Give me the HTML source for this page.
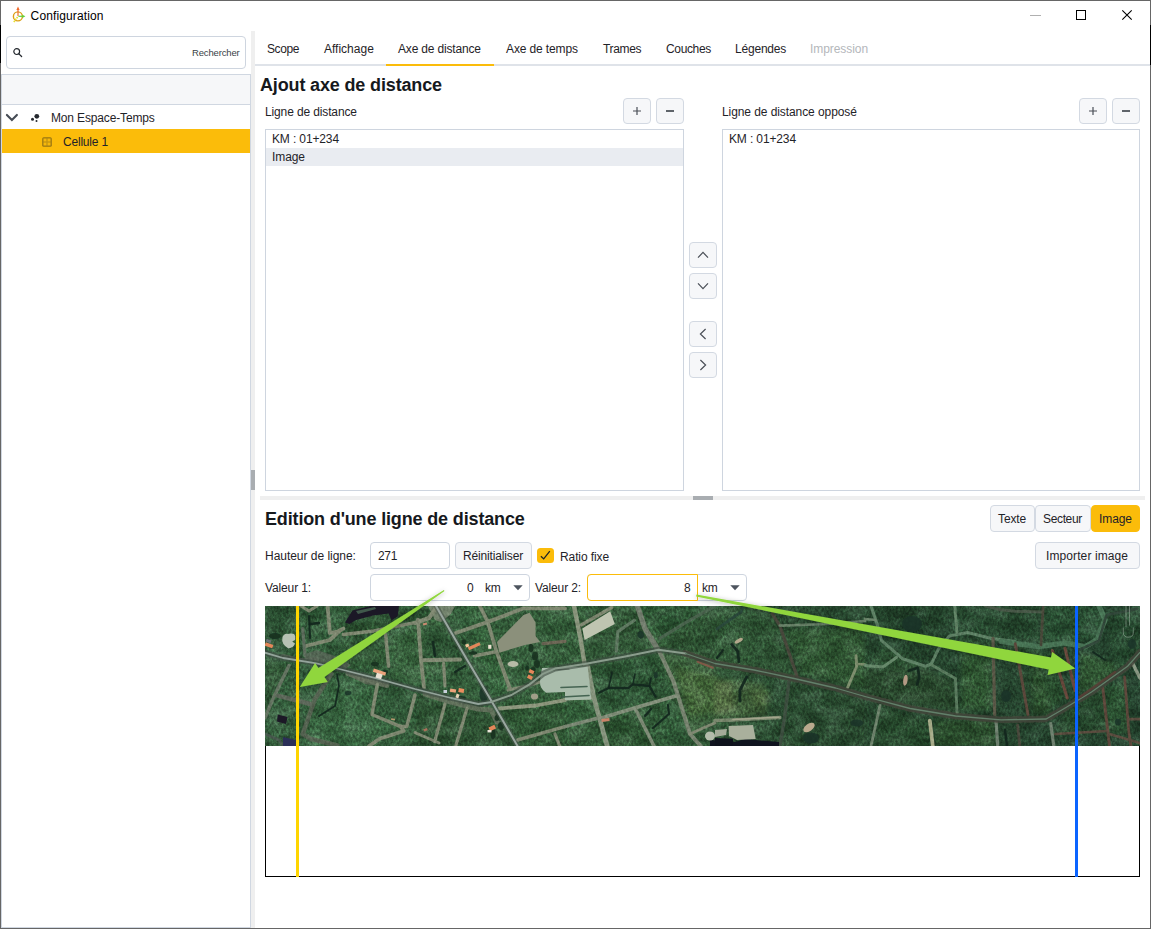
<!DOCTYPE html>
<html lang="fr">
<head>
<meta charset="utf-8">
<title>Configuration</title>
<style>
html,body{margin:0;padding:0;}
body{width:1151px;height:929px;overflow:hidden;background:#fff;position:relative;
  font-family:"Liberation Sans",sans-serif;font-size:12px;color:#1f2328;}
.a{position:absolute;}
.t{position:absolute;white-space:pre;line-height:16px;height:16px;}
.h{position:absolute;white-space:pre;font-weight:bold;font-size:18px;line-height:24px;height:24px;color:#16191d;letter-spacing:-0.15px;}
.box{position:absolute;box-sizing:border-box;border:1px solid #ced5df;background:#fff;}
.btn{position:absolute;box-sizing:border-box;border:1px solid #d3d9e2;background:#f6f7f9;border-radius:4px;}
.in{position:absolute;box-sizing:border-box;border:1px solid #ced5df;background:#fff;border-radius:4px;}
svg{position:absolute;overflow:visible;}
</style>
</head>
<body>
<!-- window frame -->
<div class="a" style="left:0;top:0;width:1151px;height:1px;background:#666;"></div>
<div class="a" style="left:0;top:928px;width:1151px;height:1px;background:#666;"></div>
<div class="a" style="left:0;top:0;width:1px;height:929px;background:#666;"></div>
<div class="a" style="left:1150px;top:0;width:1px;height:929px;background:#666;"></div>
<div class="a" style="left:0;top:25px;width:1px;height:38px;background:#000;"></div>
<div class="a" style="left:1150px;top:25px;width:1px;height:40px;background:#000;"></div>

<!-- title bar -->
<svg id="appicon" style="left:10.5px;top:5.3px" width="16" height="18" viewBox="0 0 16 18">
  <circle cx="6.9" cy="11.4" r="4.5" fill="none" stroke="#dca016" stroke-width="1.4"/>
  <path d="M6.6 12 L2.6 17.2" stroke="#e8e02c" stroke-width="1.6" stroke-dasharray="1.6 0.7" fill="none"/>
  <path d="M7 11V4" stroke="#f0682a" stroke-width="1.15" fill="none"/>
  <path d="M7 1.4 L8.6 5 L5.4 5Z" fill="#f0682a"/>
  <path d="M7.4 11.3H11.8" stroke="#5fd13a" stroke-width="1.2" fill="none"/>
  <path d="M14.4 11.3 L11.4 9.7 L11.4 12.9Z" fill="#5fd13a"/>
</svg>
<div class="t" style="left:30.6px;top:8px;color:#000;letter-spacing:0.12px;">Configuration</div>
<svg style="left:1030px;top:15px" width="11" height="1"><rect width="11" height="1" fill="#b0b0b0"/></svg>
<svg style="left:1076px;top:10px" width="10" height="10"><rect x="0.5" y="0.5" width="9" height="9" fill="none" stroke="#000" stroke-width="1"/></svg>
<svg style="left:1122px;top:10px" width="10" height="10"><path d="M0.3 0.3L9.7 9.7M9.7 0.3L0.3 9.7" stroke="#000" stroke-width="1.1" fill="none"/></svg>

<!-- left panel -->
<div class="in" style="left:6px;top:36px;width:240px;height:33px;"></div>
<svg style="left:12px;top:47px" width="11" height="11" viewBox="0 0 11 11">
  <circle cx="4.7" cy="4.6" r="2.9" fill="none" stroke="#24282e" stroke-width="1.2"/>
  <path d="M6.9 6.9L9.6 9.5" stroke="#24282e" stroke-width="1.3" stroke-linecap="round"/>
</svg>
<div class="t" style="left:192px;top:45px;font-size:9.5px;color:#3a3f46;letter-spacing:-0.15px;">Rechercher</div>
<div class="box" style="left:1px;top:74px;width:250px;height:854px;border-color:#d0d7e1;"></div>
<div class="a" style="left:2px;top:75px;width:248px;height:29px;background:#f6f7f9;border-bottom:1px solid #d0d7e1;"></div>
<svg style="left:6px;top:113px" width="12" height="8" viewBox="0 0 12 8"><path d="M0.9 1.9L5.9 7L10.9 1.9" fill="none" stroke="#464c55" stroke-width="2.1" stroke-linecap="round"/></svg>
<svg style="left:30px;top:112px" width="11" height="11" viewBox="0 0 11 11">
  <circle cx="6.8" cy="4.3" r="2.4" fill="#24282e"/><circle cx="2.5" cy="7.3" r="1.5" fill="#24282e"/><circle cx="6.5" cy="9" r="1" fill="#24282e"/>
</svg>
<div class="t" style="left:51px;top:110px;letter-spacing:-0.15px;">Mon Espace-Temps</div>
<div class="a" style="left:2px;top:129px;width:248px;height:24px;background:#fbbc0a;"></div>
<svg style="left:42px;top:137px" width="10" height="10" viewBox="0 0 10 10">
  <rect x="0.2" y="0.2" width="9.6" height="9.6" rx="1.5" fill="#967414"/><rect x="1.3" y="1.3" width="7.4" height="7.4" fill="#c79710"/>
  <rect x="1.7" y="1.7" width="2.6" height="2.6" fill="#f7b80a"/><rect x="5.7" y="1.7" width="2.6" height="2.6" fill="#f7b80a"/>
  <rect x="1.7" y="5.7" width="2.6" height="2.6" fill="#f7b80a"/><rect x="5.7" y="5.7" width="2.6" height="2.6" fill="#f7b80a"/>
</svg>
<div class="t" style="left:63px;top:134px;letter-spacing:-0.2px;">Cellule 1</div>
<!-- vertical splitter -->
<div class="a" style="left:251px;top:31px;width:4px;height:897px;background:#efefef;"></div>
<div class="a" style="left:251px;top:470px;width:4px;height:20px;background:#a9adb1;"></div>

<!-- tabs -->
<div class="a" style="left:255px;top:64px;width:895px;height:2px;background:#dfe3e9;"></div>
<div class="a" style="left:386px;top:64px;width:108px;height:2px;background:#fbbc0a;"></div>
<div class="t" style="left:267px;top:41px;letter-spacing:-0.4px;">Scope</div>
<div class="t" style="left:324px;top:41px;letter-spacing:0px;">Affichage</div>
<div class="t" style="left:398px;top:41px;letter-spacing:-0.17px;">Axe de distance</div>
<div class="t" style="left:506px;top:41px;letter-spacing:-0.12px;">Axe de temps</div>
<div class="t" style="left:603px;top:41px;letter-spacing:-0.35px;">Trames</div>
<div class="t" style="left:666px;top:41px;letter-spacing:-0.35px;">Couches</div>
<div class="t" style="left:735px;top:41px;letter-spacing:-0.2px;">Légendes</div>
<div class="t" style="left:810px;top:41px;letter-spacing:-0.07px;color:#b4b7bb;">Impression</div>

<!-- section 1 -->
<div class="h" style="left:260px;top:73px;">Ajout axe de distance</div>
<div class="t" style="left:265px;top:104px;letter-spacing:-0.13px;">Ligne de distance</div>
<div class="btn" style="left:623px;top:98px;width:28px;height:26px;"></div>
<svg style="left:633px;top:107px" width="8" height="8"><path d="M4 0V8M0 4H8" stroke="#4a4f57" stroke-width="1.2"/></svg>
<div class="btn" style="left:656px;top:98px;width:28px;height:26px;"></div>
<svg style="left:666px;top:107px" width="8" height="8"><path d="M0 4H8" stroke="#3a3f46" stroke-width="1.6"/></svg>
<div class="box" style="left:265px;top:129px;width:419px;height:362px;"></div>
<div class="t" style="left:272px;top:131px;letter-spacing:-0.13px;">KM : 01+234</div>
<div class="a" style="left:266px;top:148px;width:417px;height:18px;background:#e9ecf1;"></div>
<div class="t" style="left:272px;top:149px;letter-spacing:-0.08px;">Image</div>

<div class="btn" style="left:689px;top:242px;width:28px;height:26px;"></div>
<svg style="left:697px;top:251px" width="12" height="8" viewBox="0 0 12 8"><path d="M1 6.6L6 1.4L11 6.6" fill="none" stroke="#4a4f57" stroke-width="1.2"/></svg>
<div class="btn" style="left:689px;top:273px;width:28px;height:26px;"></div>
<svg style="left:697px;top:282px" width="12" height="8" viewBox="0 0 12 8"><path d="M1 1.4L6 6.6L11 1.4" fill="none" stroke="#4a4f57" stroke-width="1.2"/></svg>
<div class="btn" style="left:689px;top:321px;width:28px;height:26px;"></div>
<svg style="left:699px;top:328px" width="8" height="12" viewBox="0 0 8 12"><path d="M6.6 1L1.4 6L6.6 11" fill="none" stroke="#4a4f57" stroke-width="1.2"/></svg>
<div class="btn" style="left:689px;top:352px;width:28px;height:26px;"></div>
<svg style="left:699px;top:359px" width="8" height="12" viewBox="0 0 8 12"><path d="M1.4 1L6.6 6L1.4 11" fill="none" stroke="#4a4f57" stroke-width="1.2"/></svg>

<div class="t" style="left:722px;top:104px;letter-spacing:-0.08px;">Ligne de distance opposé</div>
<div class="btn" style="left:1079px;top:98px;width:28px;height:26px;"></div>
<svg style="left:1089px;top:107px" width="8" height="8"><path d="M4 0V8M0 4H8" stroke="#4a4f57" stroke-width="1.2"/></svg>
<div class="btn" style="left:1112px;top:98px;width:28px;height:26px;"></div>
<svg style="left:1122px;top:107px" width="8" height="8"><path d="M0 4H8" stroke="#3a3f46" stroke-width="1.6"/></svg>
<div class="box" style="left:722px;top:129px;width:418px;height:362px;"></div>
<div class="t" style="left:729px;top:131px;letter-spacing:-0.13px;">KM : 01+234</div>

<!-- horizontal splitter -->
<div class="a" style="left:260px;top:496px;width:885px;height:4px;background:#efefef;"></div>
<div class="a" style="left:693px;top:496px;width:20px;height:4px;background:#a9adb1;"></div>

<!-- section 2 -->
<div class="h" style="left:265px;top:507px;">Edition d'une ligne de distance</div>
<div class="btn" style="left:990px;top:505px;width:45px;height:27px;border-radius:4px;"></div>
<div class="t" style="left:998px;top:511px;letter-spacing:-0.1px;">Texte</div>
<div class="btn" style="left:1035px;top:505px;width:56px;height:27px;border-radius:4px;"></div>
<div class="t" style="left:1043px;top:511px;letter-spacing:-0.35px;">Secteur</div>
<div class="btn" style="left:1091px;top:505px;width:49px;height:27px;background:#fbbc0a;border-color:#fbbc0a;border-radius:4px;"></div>
<div class="t" style="left:1099px;top:511px;letter-spacing:-0.08px;">Image</div>

<div class="t" style="left:265px;top:548px;letter-spacing:-0.03px;">Hauteur de ligne:</div>
<div class="in" style="left:370px;top:542px;width:80px;height:27px;"></div>
<div class="t" style="left:378px;top:548px;letter-spacing:-0.3px;">271</div>
<div class="btn" style="left:455px;top:542px;width:77px;height:27px;"></div>
<div class="t" style="left:463px;top:548px;letter-spacing:-0.15px;">Réinitialiser</div>
<div class="a" style="left:537px;top:548px;width:17px;height:15px;background:#fbbc0a;border-radius:3.5px;"></div>
<svg style="left:539px;top:550px" width="12" height="10" viewBox="0 0 12 10"><path d="M1.9 6.2L4.7 8.9L10.8 1.1" fill="none" stroke="#1f2328" stroke-width="1.3"/></svg>
<div class="t" style="left:560px;top:549px;letter-spacing:-0.1px;">Ratio fixe</div>
<div class="btn" style="left:1035px;top:542px;width:105px;height:27px;"></div>
<div class="t" style="left:1046px;top:548px;letter-spacing:0.1px;">Importer image</div>

<div class="t" style="left:265px;top:580px;letter-spacing:-0.13px;">Valeur 1:</div>
<div class="in" style="left:370px;top:574px;width:160px;height:27px;"></div>
<div class="t" style="left:467px;top:580px;">0</div>
<div class="t" style="left:485px;top:580px;letter-spacing:-0.3px;">km</div>
<svg style="left:513px;top:585px" width="10" height="6" viewBox="0 0 10 6"><path d="M0.3 0.3H9.7L5 5.3Z" fill="#4d545e"/></svg>
<div class="t" style="left:535px;top:580px;letter-spacing:-0.13px;">Valeur 2:</div>
<div class="in" style="left:587px;top:574px;width:160px;height:27px;"></div>
<div class="in" style="left:587px;top:574px;width:111px;height:27px;border-color:#fbbc0a;border-radius:4px 0 0 4px;"></div>
<div class="t" style="left:684px;top:580px;">8</div>
<div class="t" style="left:702px;top:580px;letter-spacing:-0.3px;">km</div>
<svg style="left:730px;top:585px" width="10" height="6" viewBox="0 0 10 6"><path d="M0.3 0.3H9.7L5 5.3Z" fill="#4d545e"/></svg>

<!-- canvas -->
<div class="a" style="left:265px;top:606px;width:875px;height:271px;box-sizing:border-box;border:1px solid #000;background:#fff;"></div>
<svg id="sat" style="left:265px;top:606px" width="875" height="140" viewBox="0 0 875 140">
<defs>
<linearGradient id="gbase" x1="0" x2="1" y1="0" y2="0"><stop offset="0" stop-color="#3b6944"/><stop offset="0.45" stop-color="#3d6b42"/><stop offset="0.6" stop-color="#325a3a"/><stop offset="1" stop-color="#2d5238"/></linearGradient>
<linearGradient id="gdark" x1="0" x2="1" y1="0" y2="0"><stop offset="0" stop-color="#14261c" stop-opacity="0.06"/><stop offset="0.5" stop-color="#14261c" stop-opacity="0.08"/><stop offset="0.62" stop-color="#14261c" stop-opacity="0.2"/><stop offset="1" stop-color="#14261c" stop-opacity="0.22"/></linearGradient>
<filter id="bl2" x="-10%" y="-10%" width="120%" height="120%"><feGaussianBlur stdDeviation="2.2"/></filter>
<filter id="bl0" x="-5%" y="-5%" width="110%" height="110%"><feGaussianBlur stdDeviation="0.45"/></filter>
<filter id="bl1" x="-10%" y="-10%" width="120%" height="120%"><feGaussianBlur stdDeviation="0.7"/></filter>
<filter id="noise" color-interpolation-filters="sRGB" x="0" y="0" width="100%" height="100%"><feTurbulence type="fractalNoise" baseFrequency="0.42 0.3" numOctaves="3" seed="7" result="n"/><feColorMatrix in="n" type="matrix" values="1.5 0 0 0 -0.37  1.5 0 0 0 -0.37  1.5 0 0 0 -0.37  0 0 0 0 1"/></filter>
<filter id="noise2" color-interpolation-filters="sRGB" x="0" y="0" width="100%" height="100%"><feTurbulence type="fractalNoise" baseFrequency="0.05 0.07" numOctaves="2" seed="3" result="n"/><feColorMatrix in="n" type="matrix" values="0 2 0 0 -0.52  0 2 0 0 -0.52  0 2 0 0 -0.52  0 0 0 0 1"/></filter>
<clipPath id="cp"><rect width="875" height="140"/></clipPath>
</defs>
<g clip-path="url(#cp)">
<rect width="875" height="140" fill="url(#gbase)"/>
<g filter="url(#bl2)">
<polygon points="0,0 30,0 28,44 0,44" fill="#305939" fill-opacity="0.8"/>
<polygon points="0,52 22,60 0,108" fill="#325c3a" fill-opacity="0.8"/>
<polygon points="40,0 62,0 63,30 42,38" fill="#335f3b" fill-opacity="0.7"/>
<polygon points="82,20 120,14 150,2 150,16 110,28 82,30" fill="#2f5835" fill-opacity="0.8"/>
<polygon points="52,96 66,72 110,80 106,110 136,122 100,140 40,140" fill="#43774c" fill-opacity="0.7"/>
<polygon points="76,34 120,30 122,60 80,64" fill="#335f39" fill-opacity="0.7"/>
<polygon points="125,30 150,20 170,4 196,52 150,80 126,72" fill="#3f7042" fill-opacity="0.6"/>
<polygon points="114,80 150,90 140,120 110,108" fill="#35603a" fill-opacity="0.7"/>
<polygon points="152,90 226,100 250,140 150,140" fill="#315a35" fill-opacity="0.75"/>
<polygon points="160,16 190,28 196,52 158,54" fill="#325e39" fill-opacity="0.6"/>
<polygon points="200,0 214,0 230,44 244,84 228,94" fill="#417649" fill-opacity="0.6"/>
<polygon points="236,96 300,92 300,140 256,140" fill="#356139" fill-opacity="0.7"/>
<polygon points="326,62 392,46 410,90 334,112" fill="#33603a" fill-opacity="0.7"/>
<polygon points="336,114 372,104 388,140 342,140" fill="#2f5934" fill-opacity="0.7"/>
<polygon points="376,102 410,92 424,128 434,140 390,140" fill="#39683f" fill-opacity="0.6"/>
<polygon points="300,98 330,94 333,112 300,120" fill="#3e6f43" fill-opacity="0.6"/>
<polygon points="322,0 372,0 392,42 352,50 320,58" fill="#315a37" fill-opacity="0.6"/>
<polygon points="380,0 450,0 396,32" fill="#305d37" fill-opacity="0.8"/>
<polygon points="398,36 450,4 450,54 420,46" fill="#345d38" fill-opacity="0.7"/>
<polygon points="396,46 450,58 450,116 426,128" fill="#436d40" fill-opacity="0.6"/>
<polygon points="450,72 500,78 502,110 450,112" fill="#5a7b47" fill-opacity="0.6"/>
<polygon points="410,62 452,70 452,106 424,110" fill="#587d45" fill-opacity="0.6"/>
<polygon points="450,76 466,76 470,104 450,108" fill="#7e9361" fill-opacity="0.55"/>
<polygon points="486,84 504,84 504,100 488,100" fill="#5a7b45" fill-opacity="0.6"/>
<polygon points="450,0 508,8 530,70 450,56" fill="#3e6a3f" fill-opacity="0.6"/>
<polygon points="520,24 600,20 600,84 536,68" fill="#417141" fill-opacity="0.75"/>
<polygon points="526,78 600,94 600,140 516,140" fill="#335c35" fill-opacity="0.6"/>
<polygon points="600,0 690,0 692,26 672,44 640,52 616,34" fill="#2a5234" fill-opacity="0.8"/>
<polygon points="634,9 660,9 660,27 634,27" fill="#21432b" fill-opacity="0.7"/>
<polygon points="600,62 660,62 690,74 692,106 600,90" fill="#355e37" fill-opacity="0.6"/>
<polygon points="696,34 726,36 727,104 696,104" fill="#40713f" fill-opacity="0.8"/>
<polygon points="616,100 664,116 664,140 608,140" fill="#315933" fill-opacity="0.7"/>
<polygon points="670,114 730,114 732,140 670,140" fill="#3a6938" fill-opacity="0.6"/>
<polygon points="692,0 778,0 776,38 750,36 726,32 694,26" fill="#305a38" fill-opacity="0.7"/>
<polygon points="736,40 774,42 788,112 764,110 750,40" fill="#305532" fill-opacity="0.7"/>
<polygon points="780,0 834,0 840,14 832,33 800,37 776,39" fill="#396b41" fill-opacity="0.7"/>
<polygon points="816,46 858,60 826,84 813,84" fill="#3e6f40" fill-opacity="0.8"/>
<polygon points="766,46 786,46 800,92 780,108 768,106" fill="#3c6d3e" fill-opacity="0.7"/>
<polygon points="842,86 858,76 862,110 846,122" fill="#3e6f3f" fill-opacity="0.7"/>
<polygon points="620,40 662,62 640,64 604,56" fill="#3e6d3f" fill-opacity="0.6"/>
<polygon points="800,104 838,82 844,126 790,128" fill="#305a35" fill-opacity="0.7"/>
<polygon points="842,10 875,3 875,46 850,66" fill="#33633a" fill-opacity="0.6"/>
<polygon points="840,82 860,72 864,128 844,128" fill="#39693d" fill-opacity="0.6"/>
</g>
<rect width="875" height="140" fill="url(#gdark)"/>
<rect width="875" height="140" filter="url(#noise2)" opacity="0.28" style="mix-blend-mode:soft-light"/>
<rect width="875" height="140" filter="url(#noise)" opacity="0.22" style="mix-blend-mode:overlay"/>
<polygon points="163,0 190,0 186,8 176,16 170,14" fill="#7b8873" fill-opacity="0.9"/>
<path d="M66.3 67.8 L49.7 93.5 L37.7 128 L45.2 132.7 L72.4 139.5" stroke="#5d6657" stroke-width="4.5" stroke-opacity="0.85" fill="none" stroke-linecap="round" stroke-linejoin="round"/>
<path d="M83 67.5 L100 73 L122 79.5" stroke="#6a7563" stroke-width="5" stroke-opacity="0.8" fill="none" stroke-linecap="round" stroke-linejoin="round"/>
<path d="M160 88 L186 96 L213 103 L226 104 L232 116" stroke="#6f7a66" stroke-width="5" stroke-opacity="0.8" fill="none" stroke-linecap="round" stroke-linejoin="round"/>
<path d="M18 50 L36 54 L52 53" stroke="#5f6a5a" stroke-width="4" stroke-opacity="0.7" fill="none" stroke-linecap="round" stroke-linejoin="round"/>
<polygon points="40,48 52,44 70,50 86,59 80,63 52,56 40,53" fill="#5c6a5b" fill-opacity="0.8"/>
<polygon points="84,66 124,77 122,81 100,78 84,70" fill="#66725f" fill-opacity="0.8"/>
<g filter="url(#bl0)">
<path d="M62.6 0 L64.8 27 L72.4 25.6 L78.4 22.6" stroke="#818a73" stroke-width="3.8" fill="none" stroke-linecap="round" stroke-linejoin="round"/>
<path d="M40.7 40 L64.8 34 L75.4 24" stroke="#818a73" stroke-width="3.8" fill="none" stroke-linecap="round" stroke-linejoin="round"/>
<path d="M78.4 28.6 L108.5 24.9 L150 16.6" stroke="#818a73" stroke-width="3.5" fill="none" stroke-linecap="round" stroke-linejoin="round"/>
<path d="M120.6 28.6 L123.6 60.3" stroke="#818a73" stroke-width="3.5" fill="none" stroke-linecap="round" stroke-linejoin="round"/>
<path d="M37.7 22.6 L40 49.7" stroke="#60705f" stroke-width="3.2" fill="none" stroke-linecap="round" stroke-linejoin="round"/>
<path d="M24 59.5 L9 90.5 L0 111.6" stroke="#667663" stroke-width="3.5" fill="none" stroke-linecap="round" stroke-linejoin="round"/>
<path d="M12.8 89.7 L45.2 98" stroke="#5f6b5b" stroke-width="4.4" fill="none" stroke-linecap="round" stroke-linejoin="round"/>
<path d="M112.3 78.4 L107 108.5 L135.7 120.6 L141.7 120.6 L150 89" stroke="#818a73" stroke-width="3.5" fill="none" stroke-linecap="round" stroke-linejoin="round"/>
<path d="M135.7 120.6 L138.7 125 L114.6 132.7 L104 140" stroke="#818a73" stroke-width="3.8" fill="none" stroke-linecap="round" stroke-linejoin="round"/>
<path d="M36 0 L44 5 L52 0" stroke="#818a73" stroke-width="3.2" fill="none" stroke-linecap="round" stroke-linejoin="round"/>
<path d="M0 128 L14 134 L18 140" stroke="#4a5a50" stroke-width="2.75" fill="none" stroke-linecap="round" stroke-linejoin="round"/>
<path d="M153 13.6 L156 54.3 L159 81.4" stroke="#818a73" stroke-width="3.8" fill="none" stroke-linecap="round" stroke-linejoin="round"/>
<path d="M156 54.3 L195 53.5" stroke="#818a73" stroke-width="4.1" fill="none" stroke-linecap="round" stroke-linejoin="round"/>
<path d="M150 17 L164 12 L171 2" stroke="#818a73" stroke-width="4.1" fill="none" stroke-linecap="round" stroke-linejoin="round"/>
<path d="M178.6 57.3 L180 80" stroke="#818a73" stroke-width="3.2" fill="none" stroke-linecap="round" stroke-linejoin="round"/>
<path d="M190.7 27 L220.9 16.6 L258.5 2.3 L300 2.3" stroke="#818a73" stroke-width="3.8" fill="none" stroke-linecap="round" stroke-linejoin="round"/>
<path d="M214.8 0 L222.4 15 L231.4 45.2 L245 83" stroke="#818a73" stroke-width="3.8" fill="none" stroke-linecap="round" stroke-linejoin="round"/>
<path d="M209.6 49.7 L230 46" stroke="#818a73" stroke-width="3.5" fill="none" stroke-linecap="round" stroke-linejoin="round"/>
<path d="M234.4 102.5 L270.6 99.5 L300 94.2" stroke="#8f987f" stroke-width="3.8" fill="none" stroke-linecap="round" stroke-linejoin="round"/>
<path d="M252.5 134 L300 120.6" stroke="#818a73" stroke-width="3.5" fill="none" stroke-linecap="round" stroke-linejoin="round"/>
<path d="M290 128 L294.7 140" stroke="#818a73" stroke-width="3.2" fill="none" stroke-linecap="round" stroke-linejoin="round"/>
<path d="M180 98 L169.6 135.7" stroke="#818a73" stroke-width="3.2" fill="none" stroke-linecap="round" stroke-linejoin="round"/>
<path d="M202 102.5 L190.7 140" stroke="#818a73" stroke-width="3.2" fill="none" stroke-linecap="round" stroke-linejoin="round"/>
<path d="M150 126.6 L174 137" stroke="#818a73" stroke-width="2.9" fill="none" stroke-linecap="round" stroke-linejoin="round"/>
<path d="M278 37.7 L300 35.4" stroke="#6f6a58" stroke-width="3.2" fill="none" stroke-linecap="round" stroke-linejoin="round"/>
<path d="M243 84 L262 80 L275 76" stroke="#818a73" stroke-width="2.9" fill="none" stroke-linecap="round" stroke-linejoin="round"/>
<path d="M309 0 L315 30 L319.6 58" stroke="#8d9880" stroke-width="4.4" fill="none" stroke-linecap="round" stroke-linejoin="round"/>
<path d="M322.6 60.3 L328.6 90.5 L334.7 113 L342.2 140" stroke="#88957f" stroke-width="4.7" fill="none" stroke-linecap="round" stroke-linejoin="round"/>
<path d="M372.4 0 L380 22.6 L392 42" stroke="#75806f" stroke-width="5.3" fill="none" stroke-linecap="round" stroke-linejoin="round"/>
<path d="M393.5 43.7 L408.5 75.4 L425 128 L435.7 140" stroke="#7a8672" stroke-width="4.1" fill="none" stroke-linecap="round" stroke-linejoin="round"/>
<path d="M395 32.4 L420.6 16.6 L450 0" stroke="#4c6650" stroke-width="3.2" fill="none" stroke-linecap="round" stroke-linejoin="round"/>
<path d="M335.4 112.3 L375.4 100.3 L411.6 89.7" stroke="#84917c" stroke-width="3.8" fill="none" stroke-linecap="round" stroke-linejoin="round"/>
<path d="M370.9 104 L389 140" stroke="#7f8c77" stroke-width="3.5" fill="none" stroke-linecap="round" stroke-linejoin="round"/>
<path d="M300 120.6 L332.4 112.3" stroke="#7d8a76" stroke-width="3.5" fill="none" stroke-linecap="round" stroke-linejoin="round"/>
<path d="M316.6 18.8 L346.7 1.5" stroke="#818a73" stroke-width="3.5" fill="none" stroke-linecap="round" stroke-linejoin="round"/>
<path d="M351.3 45.2 L352.8 25.6 L369.4 14.3" stroke="#607a62" stroke-width="3.2" fill="none" stroke-linecap="round" stroke-linejoin="round"/>
<path d="M300 93 L326 92" stroke="#8f987f" stroke-width="2.9" fill="none" stroke-linecap="round" stroke-linejoin="round"/>
<path d="M425 128 L438 122 L450 117" stroke="#818a73" stroke-width="2.9" fill="none" stroke-linecap="round" stroke-linejoin="round"/>
<path d="M507.3 7.5 L514.8 19.6 L532.2 70.9" stroke="#4a4a3c" stroke-width="3.2" fill="none" stroke-linecap="round" stroke-linejoin="round"/>
<path d="M514.8 19.6 L561.6 18 L600 15" stroke="#6a846a" stroke-width="2.75" fill="none" stroke-linecap="round" stroke-linejoin="round"/>
<path d="M523.9 75.4 L519.4 113 L514.8 140" stroke="#3e5040" stroke-width="3.5" fill="none" stroke-linecap="round" stroke-linejoin="round"/>
<path d="M591 49.7 L591.7 60.3 L582.7 81.4" stroke="#80906f" stroke-width="2.9" fill="none" stroke-linecap="round" stroke-linejoin="round"/>
<path d="M591.7 58 L600 58.5" stroke="#80906f" stroke-width="2.75" fill="none" stroke-linecap="round" stroke-linejoin="round"/>
<path d="M450 114.6 L467 114 L514.8 111.6" stroke="#7c8a70" stroke-width="3.5" fill="none" stroke-linecap="round" stroke-linejoin="round"/>
<path d="M452 23 L476 6 L478 0" stroke="#2a4a3a" stroke-width="2.9" fill="none" stroke-linecap="round" stroke-linejoin="round"/>
<path d="M606 0 L612 18 L616.6 34.7 L637.7 52.8 L660.3 60.3 L666.3 58 L673.9 42.2 L684.4 30 L702.5 26.4 L726.6 32.4 L750 35.4" stroke="#5f8266" stroke-width="3.05" fill="none" stroke-linecap="round" stroke-linejoin="round"/>
<path d="M666.3 58.8 L690.5 72.4 L692 107" stroke="#5b7d60" stroke-width="2.9" fill="none" stroke-linecap="round" stroke-linejoin="round"/>
<path d="M600 59.5 L618 61 L631.7 51.3" stroke="#678a6c" stroke-width="2.9" fill="none" stroke-linecap="round" stroke-linejoin="round"/>
<path d="M689.7 0 L692 26.4" stroke="#648668" stroke-width="2.9" fill="none" stroke-linecap="round" stroke-linejoin="round"/>
<path d="M728 32.4 L729.7 108.5" stroke="#5c5a48" stroke-width="3.2" fill="none" stroke-linecap="round" stroke-linejoin="round"/>
<path d="M615 99.5 L606 140" stroke="#6f856e" stroke-width="2.9" fill="none" stroke-linecap="round" stroke-linejoin="round"/>
<path d="M731 114.6 L732.7 140" stroke="#6f8270" stroke-width="3.2" fill="none" stroke-linecap="round" stroke-linejoin="round"/>
<path d="M720.6 0 L735.7 3.8 L750 5.3 L778 6" stroke="#4a5a48" stroke-width="2.9" fill="none" stroke-linecap="round" stroke-linejoin="round"/>
<path d="M664.8 114.6 L667.8 140" stroke="#a9ad8c" stroke-width="3.8" fill="none" stroke-linecap="round" stroke-linejoin="round"/>
<path d="M600 13 L611 14" stroke="#6a846a" stroke-width="2.75" fill="none" stroke-linecap="round" stroke-linejoin="round"/>
<path d="M736 35.4 L773.7 40.7 L799.3 37 L820.4 40.7 L832.5 33.2 L840 13.6 L834 0" stroke="#4a7557" stroke-width="5.3" fill="none" stroke-linecap="round" stroke-linejoin="round"/>
<path d="M750.3 37.7 L763 108.5" stroke="#5d4a3c" stroke-width="2.9" fill="none" stroke-linecap="round" stroke-linejoin="round"/>
<path d="M778.2 0 L776 39" stroke="#4a4a3a" stroke-width="2.75" fill="none" stroke-linecap="round" stroke-linejoin="round"/>
<path d="M787.3 44.5 L802.3 92" stroke="#6a4a3c" stroke-width="3.05" fill="none" stroke-linecap="round" stroke-linejoin="round"/>
<path d="M800 42.2 L810 84.4" stroke="#6a4a3c" stroke-width="3.05" fill="none" stroke-linecap="round" stroke-linejoin="round"/>
<path d="M837.8 82 L844.5 140" stroke="#5f4a3c" stroke-width="2.9" fill="none" stroke-linecap="round" stroke-linejoin="round"/>
<path d="M859.6 70.9 L864 128 L866 140" stroke="#5f4a3c" stroke-width="2.75" fill="none" stroke-linecap="round" stroke-linejoin="round"/>
<path d="M790.3 128 L841.5 125" stroke="#5c4e40" stroke-width="2.75" fill="none" stroke-linecap="round" stroke-linejoin="round"/>
<path d="M844.5 128 L874.7 137" stroke="#5c4e40" stroke-width="2.75" fill="none" stroke-linecap="round" stroke-linejoin="round"/>
<path d="M864 113 L874.7 113" stroke="#5c4e40" stroke-width="2.75" fill="none" stroke-linecap="round" stroke-linejoin="round"/>
<path d="M814.4 43.7 L834 34.7 L841.5 9 L871.7 3" stroke="#33483a" stroke-width="2.6" fill="none" stroke-linecap="round" stroke-linejoin="round"/>
<path d="M785.7 117.6 L788.8 140" stroke="#6f8270" stroke-width="3.2" fill="none" stroke-linecap="round" stroke-linejoin="round"/>
<path d="M752.6 119 L754.8 140" stroke="#4a4a3c" stroke-width="2.75" fill="none" stroke-linecap="round" stroke-linejoin="round"/>
<path d="M868 58 L875 72" stroke="#8a9884" stroke-width="3.5" fill="none" stroke-linecap="round" stroke-linejoin="round"/>
</g>
<rect width="875" height="140" filter="url(#noise)" opacity="0.13" style="mix-blend-mode:overlay"/>
<path d="M334 86.7 L343.7 82 L363.3 82 L367.8 78.4 L384.4 80 L390.5 90.5" stroke="#12261d" stroke-width="2.3" stroke-opacity="0.92" fill="none" stroke-linecap="round" stroke-linejoin="round"/>
<path d="M343.7 82 L347 66" stroke="#12261d" stroke-width="1.7" stroke-opacity="0.92" fill="none" stroke-linecap="round" stroke-linejoin="round"/>
<path d="M367.8 78.4 L370 68" stroke="#12261d" stroke-width="1.5" stroke-opacity="0.92" fill="none" stroke-linecap="round" stroke-linejoin="round"/>
<path d="M384.4 80 L386 72" stroke="#12261d" stroke-width="1.7" stroke-opacity="0.92" fill="none" stroke-linecap="round" stroke-linejoin="round"/>
<path d="M466.6 38.4 L472.6 45.2 L474 55.8" stroke="#12261d" stroke-width="2.7" stroke-opacity="0.92" fill="none" stroke-linecap="round" stroke-linejoin="round"/>
<path d="M481.7 70.9 L474.9 84.4 L474.9 95" stroke="#12261d" stroke-width="2.9" stroke-opacity="0.92" fill="none" stroke-linecap="round" stroke-linejoin="round"/>
<path d="M643.7 64.8 L652.8 61.8 L654.3 70.9 L652 78.4" stroke="#12261d" stroke-width="2.7" stroke-opacity="0.92" fill="none" stroke-linecap="round" stroke-linejoin="round"/>
<path d="M380 110 L386 103" stroke="#12261d" stroke-width="2.3" stroke-opacity="0.92" fill="none" stroke-linecap="round" stroke-linejoin="round"/>
<path d="M388 122 L404 108 L403 99" stroke="#12261d" stroke-width="2.1" stroke-opacity="0.92" fill="none" stroke-linecap="round" stroke-linejoin="round"/>
<path d="M72 68 L74 80 L70 100 L54 110" stroke="#12261d" stroke-width="1.7" stroke-opacity="0.92" fill="none" stroke-linecap="round" stroke-linejoin="round"/>
<path d="M44 10 L45 32" stroke="#12261d" stroke-width="2.1" stroke-opacity="0.92" fill="none" stroke-linecap="round" stroke-linejoin="round"/>
<path d="M45 18 L54 17" stroke="#12261d" stroke-width="2.5" stroke-opacity="0.92" fill="none" stroke-linecap="round" stroke-linejoin="round"/>
<path d="M168 36 L170 50" stroke="#12261d" stroke-width="2.5" stroke-opacity="0.92" fill="none" stroke-linecap="round" stroke-linejoin="round"/>
<path d="M190 66 L200 60" stroke="#12261d" stroke-width="2.1" stroke-opacity="0.92" fill="none" stroke-linecap="round" stroke-linejoin="round"/>
<path d="M452 52 L458 44" stroke="#12261d" stroke-width="2.1" stroke-opacity="0.92" fill="none" stroke-linecap="round" stroke-linejoin="round"/>
<path d="M740 124 L742 140" stroke="#12261d" stroke-width="2.5" stroke-opacity="0.92" fill="none" stroke-linecap="round" stroke-linejoin="round"/>
<path d="M828 46 L840 54" stroke="#12261d" stroke-width="2.1" stroke-opacity="0.92" fill="none" stroke-linecap="round" stroke-linejoin="round"/>
<ellipse cx="390.8" cy="69.3" rx="2" ry="3.2" fill="#1a3328" fill-opacity="0.85"/>
<ellipse cx="375.7" cy="28.7" rx="3.2" ry="3.8" fill="#1a3328" fill-opacity="0.85"/>
<ellipse cx="83" cy="87" rx="3.5" ry="2" fill="#1a3328" fill-opacity="0.85"/>
<ellipse cx="546" cy="132" rx="8" ry="5.5" fill="#1a3328" fill-opacity="0.85"/>
<ellipse cx="592" cy="117" rx="6.5" ry="3.5" fill="#1a3328" fill-opacity="0.85"/>
<ellipse cx="741" cy="90" rx="5" ry="6" fill="#1a3328" fill-opacity="0.85"/>
<ellipse cx="853" cy="116" rx="3" ry="3.5" fill="#1a3328" fill-opacity="0.85"/>
<ellipse cx="867" cy="38" rx="4" ry="5" fill="#1a3328" fill-opacity="0.85"/>
<ellipse cx="219" cy="88" rx="4.5" ry="8" fill="#1a3328" fill-opacity="0.85"/>
<ellipse cx="647" cy="18" rx="10" ry="8" fill="#1a3328" fill-opacity="0.85"/>
<g filter="url(#bl1)">
<ellipse cx="266" cy="42" rx="2.6" ry="4" fill="#16301f" fill-opacity="0.9"/>
<ellipse cx="270" cy="50" rx="3" ry="4.5" fill="#16301f" fill-opacity="0.9"/>
<ellipse cx="272" cy="58" rx="3" ry="4" fill="#16301f" fill-opacity="0.9"/>
<ellipse cx="268" cy="64" rx="2.5" ry="3" fill="#16301f" fill-opacity="0.9"/>
<ellipse cx="262" cy="62" rx="2" ry="2.5" fill="#16301f" fill-opacity="0.9"/>
<ellipse cx="199" cy="36" rx="2.5" ry="2.5" fill="#16301f" fill-opacity="0.9"/>
<ellipse cx="208" cy="47" rx="4" ry="1.8" fill="#16301f" fill-opacity="0.9"/>
<ellipse cx="232" cy="112" rx="2.5" ry="3" fill="#16301f" fill-opacity="0.9"/>
<ellipse cx="236" cy="120" rx="3" ry="4" fill="#16301f" fill-opacity="0.9"/>
<ellipse cx="228" cy="128" rx="2.5" ry="5" fill="#16301f" fill-opacity="0.9"/>
<ellipse cx="196" cy="92" rx="5" ry="2" fill="#16301f" fill-opacity="0.9"/>
<ellipse cx="10" cy="30" rx="6" ry="3" fill="#16301f" fill-opacity="0.9"/>
<ellipse cx="110" cy="58" rx="4" ry="2" fill="#16301f" fill-opacity="0.9"/>
<ellipse cx="120" cy="66" rx="3" ry="2" fill="#16301f" fill-opacity="0.9"/>
</g>
<polygon points="80,16.6 87.4,4.5 105.5,0 134,0 132.7,10.5 126.6,14.3 123.6,7.5 108,9.5 90.5,14.3 84.4,18" fill="#1b1826"/>
<polygon points="91,5 110,1 111,3 93,8" fill="#4a6a55" fill-opacity="0.8"/>
<polygon points="18,131 31,134 31,140 18,140" fill="#2b2f58"/>
<polygon points="12.8,108.5 22.6,111 21,118 12,115.5" fill="#1c1826"/>
<polygon points="445,134 470,136 480,133 514,136 514,140 445,140" fill="#10141f"/>
<polygon points="450,132 468,132.7 468,140 450,140" fill="#0e121c"/>
<polygon points="232,36 258.5,9 264.6,6.8 270.6,16.6 270.6,30 275,36 260,39 234.4,46.7" fill="#8b907b"/>
<polygon points="317.3,22.6 345.2,5.3 349.8,18 319.6,34" fill="#bfc5b1"/>
<path d="M277 62 L322.6 60.3 L326.4 93.5 L300 94.2 L300 86 L281 86.7 Q274.5 82 275 75.4 Q276 66 277 62Z" fill="#a9bcab"/>
<path d="M296 81.5 L322 80.5" stroke="#3a5a48" stroke-width="1.6" stroke-opacity="0.9" fill="none" stroke-linecap="round" stroke-linejoin="round"/>
<path d="M297 91 L324 89.5" stroke="#3a5a48" stroke-width="1.6" stroke-opacity="0.9" fill="none" stroke-linecap="round" stroke-linejoin="round"/>
<path d="M288 64 L304 63" stroke="#4a5a4c" stroke-width="1.2" stroke-opacity="0.8" fill="none" stroke-linecap="round" stroke-linejoin="round"/>
<ellipse cx="248" cy="58" rx="5.5" ry="3" fill="#b7bba7"/>
<ellipse cx="269.5" cy="90.5" rx="3.6" ry="3.1" fill="#a09e88"/>
<path d="M23.4 42.5 Q16 38 17.4 31.5 Q19 27 23 28 Q25.5 26.8 29 28 Q31 30 30 34 L27.2 35.4 L30 37.5 Q29 41.5 23.4 42.5Z" fill="#b6c1b3"/>
<polygon points="463.6,120 488,119 490.7,133 472,134 464,130" fill="#a9b09c"/>
<polygon points="450,124 462,123 461,129 450,131" fill="#a3ab98"/>
<ellipse cx="544" cy="121.5" rx="6.5" ry="3.6" fill="#b9a98d" transform="rotate(-35 544 121.5)"/>
<ellipse cx="473.8" cy="34.8" rx="4.6" ry="1.8" fill="#b3a78c" transform="rotate(-30 473.8 34.8)"/>
<ellipse cx="640.4" cy="74.2" rx="2.2" ry="5.6" fill="#b39a84" transform="rotate(8 640.4 74.2)"/>
<ellipse cx="445" cy="130" rx="5" ry="4.5" fill="#b4bcab"/>
<path d="M468 113.5 L514 111.2" stroke="#a9a890" stroke-width="1.6" stroke-opacity="0.9" fill="none" stroke-linecap="round" stroke-linejoin="round"/>
<path d="M432.7 55.8 L447.7 61.8" stroke="#8a5a4a" stroke-width="2.2" stroke-opacity="0.9" fill="none" stroke-linecap="round" stroke-linejoin="round"/>
<path d="M0 46.7 L18 52 L51.3 57.3 L78.4 64 L111.6 72.4 L150 83 L186 92 L213.3 98 L226.9 96" stroke="#3f4c44" stroke-width="5.5" stroke-opacity="0.65" fill="none" stroke-linecap="round" stroke-linejoin="round"/>
<path d="M171 0 L199.7 49.7 L226.9 95.7 L252.5 140" stroke="#4a564c" stroke-width="5" stroke-opacity="0.6" fill="none" stroke-linecap="round" stroke-linejoin="round"/>
<path d="M226.9 95.7 L246.5 89 L264.6 78.4 L278 67.8 L290 62.6 L300 61 L319.6 58 L360.3 50.5 L393.5 43.7 L420.6 47.5 L450 57.5 L489 64 L531.4 73 L570.6 82 L600 90.5 L645.2 102.5 L690.5 110 L736 113.8 L781.2 113 L799.3 102.5 L826.5 86 L862.6 60.3 L874.7 46.7" stroke="#3c4a40" stroke-width="6" stroke-opacity="0.6" fill="none" stroke-linecap="round" stroke-linejoin="round"/>
<path d="M420.6 47.5 L450 57.5 L489 64 L531.4 73 L570.6 82 L600 90.5 L645.2 102.5 L690.5 110 L736 113.8 L781.2 113 L799.3 102.5 L826.5 86 L862.6 60.3 L874.7 46.7" stroke="#2a3a30" stroke-width="5.5" stroke-opacity="0.45" fill="none" stroke-linecap="round" stroke-linejoin="round"/>
<path d="M420.6 47.5 L450 57.5 L489 64 L531.4 73 L570.6 82 L600 90.5 L645.2 102.5 L690.5 110 L736 113.8 L781.2 113 L799.3 102.5 L826.5 86 L862.6 60.3 L874.7 46.7" stroke="#5a4a3e" stroke-width="7" stroke-opacity="0.35" fill="none" stroke-linecap="round" stroke-linejoin="round" stroke-dasharray="7 5"/>
<path d="M0 46.7 L18 52 L51.3 57.3 L78.4 64 L111.6 72.4 L150 83 L186 92 L213.3 98 L226.9 96" stroke="#93a39a" stroke-width="1.8" fill="none" stroke-linecap="round" stroke-linejoin="round"/>
<path d="M171 0 L199.7 49.7 L226.9 95.7 L252.5 140" stroke="#9aa7a0" stroke-width="2" fill="none" stroke-linecap="round" stroke-linejoin="round"/>
<path d="M226.9 95.7 L246.5 89 L264.6 78.4 L278 67.8 L290 62.6 L300 61 L319.6 58 L360.3 50.5 L393.5 43.7 L420.6 47.5" stroke="#8a9c8c" stroke-width="2" fill="none" stroke-linecap="round" stroke-linejoin="round"/>
<path d="M420.6 47.5 L450 57.5 L489 64 L531.4 73 L570.6 82 L600 90.5 L645.2 102.5 L690.5 110 L736 113.8 L781.2 113 L799.3 102.5 L826.5 86 L862.6 60.3 L874.7 46.7" stroke="#62806a" stroke-width="1.3" fill="none" stroke-linecap="round" stroke-linejoin="round"/>
<path d="M815 91 L850 66" stroke="#5a3f36" stroke-width="2.4" stroke-opacity="0.8" fill="none" stroke-linecap="round" stroke-linejoin="round"/>
<rect x="0" y="37.5" width="8" height="3.6" fill="#e5875a" transform="rotate(20 4 39.3)"/>
<rect x="1" y="33.5" width="5" height="3" fill="#6a7278" transform="rotate(20 3.5 35)"/>
<rect x="108" y="64.5" width="13" height="3.4" fill="#eaa27a" transform="rotate(18 114.5 66.2)"/>
<rect x="111" y="67.5" width="6" height="5" fill="#e9e2d4" transform="rotate(18 114 70)"/>
<rect x="203" y="38.6" width="12.5" height="3.2" fill="#e5875a" transform="rotate(-24 209.25 40.2)"/>
<rect x="200.5" y="38" width="3.5" height="3" fill="#f2c49a" transform="rotate(-24 202.25 39.5)"/>
<rect x="223.2" y="38.8" width="3.2" height="4" fill="#efe3d2"/>
<rect x="185" y="83" width="6" height="3.2" fill="#eba27a" transform="rotate(10 188 84.6)"/>
<rect x="193.5" y="82.5" width="5.5" height="4" fill="#ea8d5e" transform="rotate(10 196.25 84.5)"/>
<rect x="178.5" y="84" width="3.5" height="3" fill="#c9d0dc"/>
<rect x="191" y="88" width="3" height="4" fill="#e6d2b6" transform="rotate(20 192.5 90)"/>
<rect x="264" y="64" width="5" height="3.4" fill="#e5875a" transform="rotate(25 266.5 65.7)"/>
<rect x="262.5" y="69.5" width="5" height="3.6" fill="#e5875a" transform="rotate(25 265 71.3)"/>
<rect x="224" y="120" width="6.5" height="4" fill="#e5875a" transform="rotate(-25 227.25 122)"/>
<rect x="222.5" y="124" width="4" height="2.4" fill="#ece6da"/>
<rect x="336.5" y="112.5" width="8" height="3" fill="#c98268" transform="rotate(-8 340.5 114)"/>
<rect x="158" y="17" width="4" height="2" fill="#c98a70" transform="rotate(-15 160 18)"/>
<rect x="158.5" y="122.5" width="4" height="2.4" fill="#a9705a" transform="rotate(-20 160.5 123.7)"/>
<rect x="126" y="112.5" width="4" height="1.6" fill="#b79a70" transform="rotate(10 128 113.3)"/>
</g>
<path d="M861 0V21M864.5 0V19.5M858.3 21.5V26.5Q858.3 31.2 863.3 31.2Q868.3 31.2 868.3 26.5V21.5" stroke="#d5e0d6" stroke-opacity="0.55" stroke-width="0.7" fill="none"/>
</svg>
<div class="a" style="left:296px;top:606px;width:3px;height:271px;background:#ffd500;"></div>
<div class="a" style="left:1075px;top:606px;width:3px;height:271px;background:#0a64ff;"></div>
<svg id="arrows" style="left:0;top:0" width="1151" height="929" viewBox="0 0 1151 929">
<defs><filter id="ash" x="-10%" y="-20%" width="120%" height="140%"><feDropShadow dx="0" dy="1" stdDeviation="2.4" flood-color="#000" flood-opacity="0.33"/></filter></defs>
<g filter="url(#ash)"><polygon points="443.9,590.0 318.4,668.1 315.1,663.1 299.8,687.0 327.8,682.0 324.4,677.0 444.5,591.0" fill="#90d63e"/>
<polygon points="696.1,596.4 1048.7,669.6 1047.6,675.1 1075.4,668.4 1052.1,651.9 1051.0,657.4 696.5,594.6" fill="#90d63e"/></g>
</svg>


</body>
</html>
